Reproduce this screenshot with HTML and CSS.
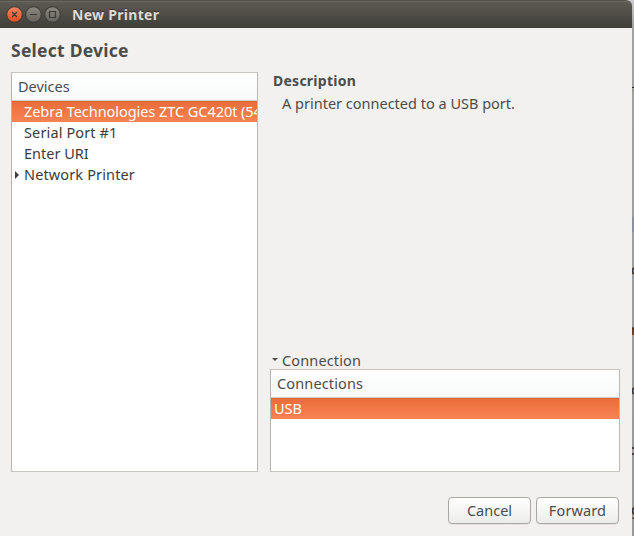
FILE: index.html
```html
<!DOCTYPE html>
<html lang="en">
<head>
<meta charset="utf-8">
<title>New Printer</title>
<link rel="stylesheet" href="styles.css">
</head>
<body>
<div class="desktop">
  <main class="window">
    <header class="titlebar">
      <svg class="controls" width="56" height="18" viewBox="0 0 56 18">
        <defs>
          <linearGradient id="close" x1="0" y1="0" x2="0" y2="1"><stop stop-color="#f58463"/><stop offset="1" stop-color="#e04d1b"/></linearGradient>
          <linearGradient id="plain" x1="0" y1="0" x2="0" y2="1"><stop stop-color="#8b8981"/><stop offset="1" stop-color="#64625b"/></linearGradient>
        </defs>
        <g stroke="#383630">
          <circle cx="8.5" cy="8.5" r="7.8" fill="url(#close)"/>
          <circle cx="27.5" cy="8.5" r="7.8" fill="url(#plain)"/>
          <circle cx="46.5" cy="8.5" r="7.8" fill="url(#plain)"/>
        </g>
        <g fill="none" stroke="#3c3b37" stroke-width="1.2">
          <path d="M6 6l5 5M11 6l-5 5M24 8.5h7M43.5 5.5h6v6h-6z"/>
        </g>
      </svg>
      <h1 class="title">New Printer</h1>
    </header>
    <h2 class="heading">Select Device</h2>
    <div class="content">
      <section class="list devices">
        <div class="column-head">Devices</div>
        <div class="row selected"><span class="tight">Zebra Technologies ZTC GC420t (54</span></div>
        <div class="row"><span class="loose">Serial Port #1</span></div>
        <div class="row"><span>Enter URI</span></div>
        <div class="row"><i class="arrow-right"></i><span class="loose">Network Printer</span></div>
      </section>
      <section class="details">
        <h3 class="description">Description</h3>
        <p class="summary">A printer connected to a USB port.</p>
        <div class="expander"><i class="arrow-down"></i><span class="loose">Connection</span></div>
        <div class="list connections">
          <div class="column-head"><span class="loose">Connections</span></div>
          <div class="row selected"><span>USB</span></div>
        </div>
      </section>
    </div>
    <footer class="actions">
      <button class="button">Cancel</button>
      <button class="button"><span class="loose">Forward</span></button>
    </footer>
  </main>
  <aside class="behind">
    <i class="dash"></i><i class="patch"></i>
    <span class="bit b1">c</span><span class="bit b2">r</span><span class="bit b3">c</span><span class="bit b4">:</span><span class="bit b5">g</span>
  </aside>
</div>
</body>
</html>
```
FILE: styles.css
```css
* { box-sizing: border-box; }
body {
  margin: 0;
  font: 14.5px/21px "Noto Sans", "Open Sans", sans-serif;
  color: #4c4c4c;
}
h1, h2, h3, p { margin: 0; }
.desktop {
  display: flex;
  width: 634px;
  height: 536px;
  overflow: hidden;
  background: #c8c8c8;
}
.window {
  display: flex;
  flex-direction: column;
  width: 632px;
  background: #f2f1f0;
  border-radius: 0 6px 0 0;
}
.titlebar {
  display: flex;
  align-items: center;
  height: 28px;
  padding-left: 6px;
  background: linear-gradient(#5e5b53, #3f3e39);
  border-top: 1px solid #55524b;
  border-radius: 0 6px 0 0;
  box-shadow: inset 0 1px #6a675e;
}
.controls { margin-top: 1px; }
.title {
  margin-left: 10px;
  font-size: 14px;
  line-height: 20px;
  letter-spacing: 0.3px;
  color: #dfdbd2;
  text-shadow: 0 -1px #33322e;
}
.heading {
  height: 44px;
  padding: 10px 0 0 11px;
  font-size: 17.5px;
  line-height: 25px;
  letter-spacing: 0.25px;
}
.content {
  display: grid;
  grid-template-columns: 247px 350px;
  column-gap: 12px;
  height: 400px;
  padding-left: 11px;
}
.list {
  overflow: hidden;
  background: #fff;
  border: 1px solid #c9c6c2;
  border-left-color: #b5b4b0;
  border-right-color: #bab9b6;
}
.column-head {
  height: 28px;
  padding: 3px 0 0 6px;
  background: linear-gradient(#fff, #f8f9f9);
  border-bottom: 1px solid #d0cecb;
}
.row {
  display: flex;
  align-items: center;
  height: 21px;
  padding-left: 12px;
  color: #3c3c3c;
  white-space: nowrap;
}
.row.selected {
  color: #fff;
  background: linear-gradient(#e96c3a, #f88353);
  box-shadow: inset 0 1px #de6531;
}
.tight { letter-spacing: -0.05px; }
.loose { letter-spacing: 0.13px; }
.connections .row { padding-left: 3px; }
.arrow-right {
  width: 4px;
  margin: 0 5px 0 -9px;
  border: solid transparent;
  border-width: 4px 0 4px 4px;
  border-left-color: #3c3c3c;
}
.details {
  display: flex;
  flex-direction: column;
}
.description {
  padding-left: 3px;
  margin-top: -2px;
  font-size: 14px;
  line-height: 21px;
  letter-spacing: 0.25px;
}
.summary { margin: 2px 0 0 12px; }
.expander {
  display: flex;
  align-items: center;
  margin-top: auto;
  height: 17px;
}
.arrow-down {
  margin: -3px 4px 0 2px;
  border: solid transparent;
  border-width: 3px 3px 0;
  border-top-color: #4c4c4c;
}
.connections { height: 103px; }
.actions {
  display: flex;
  gap: 5px;
  justify-content: flex-end;
  padding: 25px 13px 0 0;
}
.button {
  width: 83px;
  height: 27px;
  padding: 0;
  font: inherit;
  color: inherit;
  background: linear-gradient(#fff, #ececeb);
  border: 1px solid #aaa8a5;
  border-radius: 4px;
  box-shadow: 0 1px #e4e3e1;
}
.behind {
  position: relative;
  width: 2px;
  overflow: hidden;
  background: linear-gradient(#cbcbcb, #a2a2a2 25px, #999);
  color: #222;
}
.dash, .patch, .bit { position: absolute; left: 0; }
.dash { top: 87px; width: 2px; height: 1px; background: #222; box-shadow: 0 3px #a08d60; }
.patch { top: 217px; width: 2px; height: 15px; background: #8990a4; }
.bit { left: -1px; }
.b1 { top: 259px; }
.b2 { top: 319px; }
.b3 { top: 379px; }
.b4 { top: 439px; }
.b5 { top: 499px; }
```
